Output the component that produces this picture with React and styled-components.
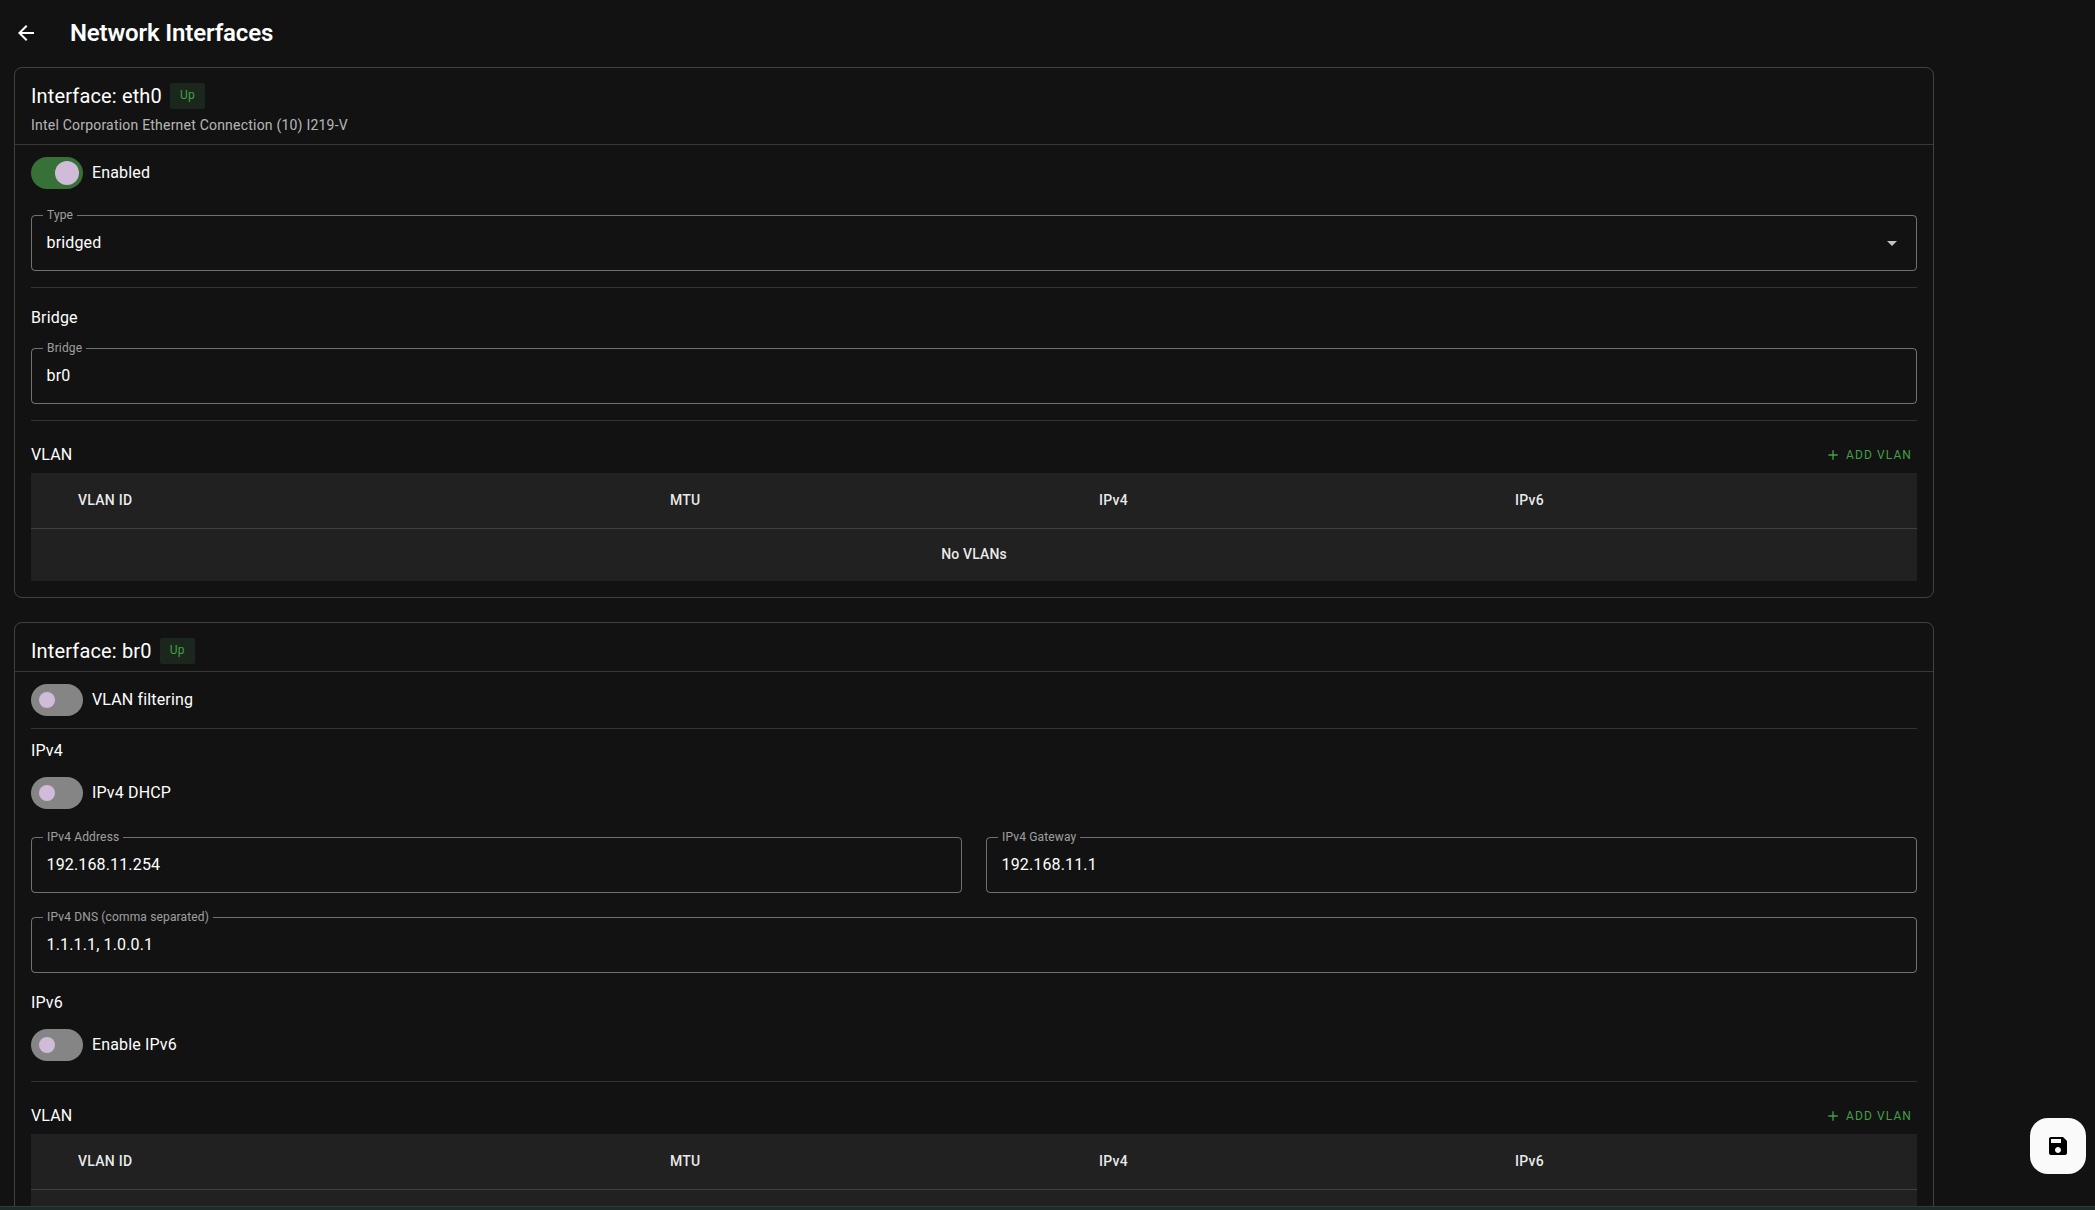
import React from "react";
import styled, { createGlobalStyle } from "styled-components";

const GlobalStyle = createGlobalStyle`
  html, body {
    margin: 0;
    height: 100%;
    background: #121212;
    overflow: hidden;
  }
  body {
    font-family: Roboto, "Liberation Sans", sans-serif;
    letter-spacing: 0.15px;
    color: #fff;
  }
`;

const Page = styled.div`
  height: 1210px;
  overflow: hidden;
  position: relative;
  box-sizing: border-box;
  background: #121212;
`;

const Content = styled.main`
  width: 1934px;
  padding-left: 14px;
  box-sizing: border-box;
`;

const TopBar = styled.header`
  height: 67px;
  display: flex;
  align-items: center;
  box-sizing: border-box;
  padding-bottom: 1px;
`;

const BackIcon = styled.svg`
  width: 24px;
  height: 24px;
  fill: #fff;
  flex: none;
`;

const Title = styled.h1`
  margin: 0 0 0 32px;
  font-size: 24px;
  font-weight: 600;
  letter-spacing: -0.15px;
  line-height: 32px;
`;

const Card = styled.section`
  border: 1px solid rgba(255, 255, 255, 0.2);
  border-radius: 8px;
  margin-bottom: 24px;
`;

const CardHeader = styled.div`
  padding: ${(p) => (p.$sub ? "15px 16px 9px" : "15px 16px 7px")};
  border-bottom: 1px solid rgba(255, 255, 255, 0.16);
`;

const CardTitleRow = styled.div`
  display: flex;
  align-items: center;
  gap: 8px;
  height: 26px;
`;

const CardTitle = styled.h2`
  margin: 0;
  font-size: 20px;
  font-weight: 400;
  line-height: 26px;
`;

const Chip = styled.span`
  width: 35px;
  height: 26px;
  display: flex;
  justify-content: center;
  padding-top: 5px;
  box-sizing: border-box;
  background: #1b271c;
  color: #43a047;
  border-radius: 2px;
  font-size: 12px;
  line-height: 14px;
`;

const Subtitle = styled.div`
  margin-top: 6px;
  font-size: 14px;
  letter-spacing: 0.21px;
  line-height: 20px;
  color: rgba(255, 255, 255, 0.7);
`;

const CardBody = styled.div`
  padding: 12px 16px 16px;
`;

const SwitchRow = styled.label`
  display: flex;
  align-items: center;
  gap: 9px;
  height: 32px;
  font-size: 16px;
  line-height: 24px;
  margin: ${(p) => p.$margin || "0"};
`;

const SwitchTrack = styled.span`
  width: 52px;
  height: 32px;
  border-radius: 16px;
  background: ${(p) => (p.$on ? "#387138" : "#858585")};
  display: flex;
  align-items: center;
  justify-content: ${(p) => (p.$on ? "flex-end" : "flex-start")};
  padding: ${(p) => (p.$on ? "0 4px" : "0 8px")};
  box-sizing: border-box;
  flex: none;
`;

const SwitchThumb = styled.span`
  width: ${(p) => (p.$on ? "24px" : "16px")};
  height: ${(p) => (p.$on ? "24px" : "16px")};
  border-radius: 50%;
  background: #d0bcd9;
`;

const Field = styled.div`
  padding: 0 15px 0 14.5px;
  flex: 1;
  min-width: 0;
  height: 56px;
  box-sizing: border-box;
  border: 1px solid rgba(255, 255, 255, 0.4);
  border-radius: 4px;
  display: flex;
  align-items: center;
  justify-content: space-between;
  position: relative;
`;

const FieldLegend = styled.span`
  position: absolute;
  top: -9px;
  left: 11px;
  padding: 0 4px;
  background: #121212;
  font-size: 12px;
  line-height: 16px;
  color: rgba(255, 255, 255, 0.6);
`;

const FieldValue = styled.span`
  font-size: 16px;
  line-height: 24px;
`;

const CaretIcon = styled.svg`
  width: 24px;
  height: 24px;
  fill: rgba(255, 255, 255, 0.75);
  margin-right: -3px;
`;

const FieldRow = styled.div`
  display: flex;
  gap: 24px;
  margin: ${(p) => p.$margin || "0"};
`;

const Rule = styled.hr`
  margin: ${(p) => p.$margin};
  border: 0;
  height: 1px;
  background: rgba(255, 255, 255, 0.14);
`;

const SectionTitle = styled.div`
  font-size: 16px;
  height: 24px;
  line-height: 26px;
  margin: ${(p) => p.$margin || "0"};
`;

const VlanHead = styled.div`
  display: flex;
  align-items: center;
  justify-content: space-between;
  height: 40px;
`;

const AddButton = styled.button`
  display: flex;
  align-items: center;
  gap: 5px;
  border: 0;
  background: none;
  padding: 2px 5px 0 0;
  color: #43a047;
  font-family: inherit;
  font-size: 12px;
  font-weight: 400;
  letter-spacing: 1.1px;
  text-transform: uppercase;
  line-height: 16px;
`;

const PlusIcon = styled.svg`
  width: 16px;
  height: 16px;
  fill: #43a047;
`;

const VlanTable = styled.div`
  background: #212121;
  margin-top: -1px;
`;

const TableRow = styled.div`
  display: grid;
  grid-template-columns: 47px 592px 429px 416px 1fr;
  align-items: center;
  height: 53px;
  padding-bottom: 2px;
  font-size: 14px;
  font-weight: 500;
  letter-spacing: 0.25px;
  color: rgba(255, 255, 255, 0.92);
  border-bottom: 1px solid rgba(255, 255, 255, 0.14);
`;

const EmptyRow = styled.div`
  height: 50px;
  padding-bottom: 2px;
  display: flex;
  align-items: center;
  justify-content: center;
  font-size: 14px;
  font-weight: 500;
  color: rgba(255, 255, 255, 0.92);
`;

const SaveFab = styled.button`
  position: absolute;
  right: 9px;
  top: 1118px;
  width: 56px;
  height: 56px;
  border: 0;
  border-radius: 18px;
  background: #fafafa;
  display: flex;
  align-items: center;
  justify-content: center;
  padding: 0;
`;

const SaveIcon = styled.svg`
  width: 24px;
  height: 24px;
  fill: #000;
`;

const BottomEdge = styled.div`
  position: absolute;
  left: 0;
  right: 0;
  bottom: 0;
  height: 4px;
  background: #1f2a2b;
  border-top: 1px solid #2e3a3b;
  box-sizing: border-box;
`;

const Toggle = ({ on, margin, children }) => (
  <SwitchRow $margin={margin}>
    <SwitchTrack $on={on}>
      <SwitchThumb $on={on} />
    </SwitchTrack>
    {children}
  </SwitchRow>
);

const TextField = ({ label, value, select }) => (
  <Field>
    <FieldLegend>{label}</FieldLegend>
    <FieldValue>{value}</FieldValue>
    {select && (
      <CaretIcon viewBox="0 0 24 24">
        <path d="m7 10 5 5 5-5z" />
      </CaretIcon>
    )}
  </Field>
);

const VlanSection = ({ children }) => (
  <>
    <VlanHead>
      <SectionTitle>VLAN</SectionTitle>
      <AddButton>
        <PlusIcon viewBox="0 0 24 24">
          <path d="M19 13h-6v6h-2v-6H5v-2h6V5h2v6h6v2z" />
        </PlusIcon>
        Add VLAN
      </AddButton>
    </VlanHead>
    <VlanTable>
      <TableRow>
        <span />
        <span>VLAN ID</span>
        <span>MTU</span>
        <span>IPv4</span>
        <span>IPv6</span>
      </TableRow>
      {children}
    </VlanTable>
  </>
);

export default function App() {
  return (
    <Page>
      <GlobalStyle />
      <Content>
        <TopBar>
          <BackIcon viewBox="0 0 24 24">
            <path d="M20 11H7.83l5.59-5.59L12 4l-8 8 8 8 1.41-1.41L7.83 13H20v-2z" />
          </BackIcon>
          <Title>Network Interfaces</Title>
        </TopBar>

        <Card>
          <CardHeader $sub>
            <CardTitleRow>
              <CardTitle>Interface: eth0</CardTitle>
              <Chip>Up</Chip>
            </CardTitleRow>
            <Subtitle>Intel Corporation Ethernet Connection (10) I219-V</Subtitle>
          </CardHeader>
          <CardBody>
            <Toggle on>Enabled</Toggle>
            <FieldRow $margin="26px 0 0">
              <TextField label="Type" value="bridged" select />
            </FieldRow>
            <Rule $margin="16px 0 17px" />
            <SectionTitle>Bridge</SectionTitle>
            <FieldRow $margin="19px 0 0">
              <TextField label="Bridge" value="br0" />
            </FieldRow>
            <Rule $margin="16px 0 13px" />
            <VlanSection>
              <EmptyRow>No VLANs</EmptyRow>
            </VlanSection>
          </CardBody>
        </Card>

        <Card>
          <CardHeader>
            <CardTitleRow>
              <CardTitle>Interface: br0</CardTitle>
              <Chip>Up</Chip>
            </CardTitleRow>
          </CardHeader>
          <CardBody>
            <Toggle>VLAN filtering</Toggle>
            <Rule $margin="12px 0 9px" />
            <SectionTitle>IPv4</SectionTitle>
            <Toggle margin="15px 0 0">IPv4 DHCP</Toggle>
            <FieldRow $margin="28px 0 0">
              <TextField label="IPv4 Address" value="192.168.11.254" />
              <TextField label="IPv4 Gateway" value="192.168.11.1" />
            </FieldRow>
            <FieldRow $margin="24px 0 0">
              <TextField label="IPv4 DNS (comma separated)" value="1.1.1.1, 1.0.0.1" />
            </FieldRow>
            <SectionTitle $margin="17px 0 0">IPv6</SectionTitle>
            <Toggle margin="15px 0 0">Enable IPv6</Toggle>
            <Rule $margin="20px 0 13px" />
            <VlanSection>
              <EmptyRow />
            </VlanSection>
          </CardBody>
        </Card>
      </Content>
      <SaveFab>
        <SaveIcon viewBox="0 0 24 24">
          <path d="M17 3H5c-1.11 0-2 .9-2 2v14c0 1.1.89 2 2 2h14c1.1 0 2-.9 2-2V7l-4-4zm-5 16c-1.66 0-3-1.34-3-3s1.34-3 3-3 3 1.34 3 3-1.34 3-3 3zm3-10H5V5h10v4z" />
        </SaveIcon>
      </SaveFab>
      <BottomEdge />
    </Page>
  );
}
